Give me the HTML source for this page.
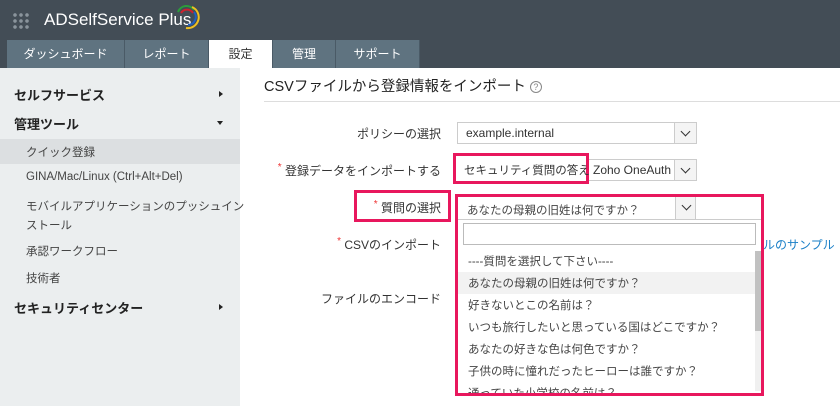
<!DOCTYPE html>
<html><head><meta charset="utf-8"><style>
*{margin:0;padding:0;box-sizing:border-box}
body{width:840px;height:406px;overflow:hidden;position:relative;background:#fff;font-family:"Liberation Sans","Noto Sans CJK JP",sans-serif;color:#333;font-size:12px}
.a{position:absolute;white-space:nowrap}
.hdr{left:0;top:0;width:840px;height:68px;background:#434d56}
.tab{top:40px;height:28px;background:#5f7380;color:#fff;font-size:12px;text-align:center;line-height:28px;border-right:1px solid #4a5a66}
.side{left:0;top:68px;width:240px;height:338px;background:#ebeeef}
.sb{font-weight:bold;font-size:13px;color:#222;left:14px}
.si{left:26px;font-size:11.5px;color:#444}
.lbl{right:399px;font-size:12px;color:#333;text-align:right}
.sel{border:1px solid #ccc;background:#fff;height:22px}
.arr{position:absolute;right:0;top:0;width:22px;height:100%;border-left:1px solid #ccc;background:#f4f4f4}
.arr:after{content:"";position:absolute;left:7px;top:5px;width:6px;height:6px;border-right:1.5px solid #333;border-bottom:1.5px solid #333;transform:rotate(45deg)}
.red{border:3px solid #e8175d}
.opt{left:10px;font-size:11.5px;color:#444}
</style></head><body>
<div class="a hdr"></div>
<div class="a" style="left:12px;top:12px;width:18px;height:18px;background:radial-gradient(circle,#8a949c 1.6px,transparent 2px) 0 0/6px 6px"></div>
<div class="a" style="left:44px;top:10px;color:#fff;font-size:17px;">ADSelfService Plus</div>
<svg class="a" style="left:172px;top:4px" width="28" height="26" viewBox="0 0 28 26"><path d="M6 8 A9 9 0 0 1 22 6" stroke="#2a9d3a" stroke-width="2" fill="none"/><path d="M9 9 A7 7 0 0 1 21 9" stroke="#d0202e" stroke-width="2" fill="none"/><path d="M20 3 A11 11 0 0 1 14 24" stroke="#f0c020" stroke-width="2" fill="none"/><path d="M22 8 A8 8 0 0 1 16 21" stroke="#2060c0" stroke-width="2" fill="none"/></svg>
<div class="a tab" style="left:7px;width:118px">ダッシュボード</div>
<div class="a tab" style="left:125px;width:84px">レポート</div>
<div class="a tab" style="left:209px;width:64px;background:#fff;color:#333">設定</div>
<div class="a tab" style="left:273px;width:63px">管理</div>
<div class="a tab" style="left:336px;width:84px">サポート</div>
<div class="a side"></div>
<div class="a sb" style="top:85px">セルフサービス</div>
<div class="a" style="left:219px;top:91px;border-left:4px solid #222;border-top:3.5px solid transparent;border-bottom:3.5px solid transparent"></div>
<div class="a sb" style="top:114px">管理ツール</div>
<div class="a" style="left:217px;top:121px;border-top:4px solid #222;border-left:3.5px solid transparent;border-right:3.5px solid transparent"></div>
<div class="a" style="left:0;top:139px;width:240px;height:25px;background:#dcdfe1"></div>
<div class="a si" style="top:144px">クイック登録</div>
<div class="a si" style="top:171px">GINA/Mac/Linux (Ctrl+Alt+Del)</div>
<div class="a si" style="top:198px">モバイルアプリケーションのプッシュイン</div>
<div class="a si" style="top:217px">ストール</div>
<div class="a si" style="top:243px">承認ワークフロー</div>
<div class="a si" style="top:270px">技術者</div>
<div class="a sb" style="top:298px">セキュリティセンター</div>
<div class="a" style="left:219px;top:304px;border-left:4px solid #222;border-top:3.5px solid transparent;border-bottom:3.5px solid transparent"></div>
<div class="a" style="left:264px;top:75px;font-size:14.5px;color:#222">CSVファイルから登録情報をインポート <span style="display:inline-block;width:12px;height:12px;border:1px solid #888;border-radius:50%;font-size:9px;text-align:center;line-height:10px;color:#888;vertical-align:middle">?</span></div>
<div class="a" style="left:264px;top:101px;width:576px;height:1px;background:#ddd"></div>
<div class="a lbl" style="top:125px">ポリシーの選択</div>
<div class="a sel" style="left:457px;top:122px;width:240px"><span style="position:absolute;left:8px;top:3px">example.internal</span><div class="arr"></div></div>
<div class="a lbl" style="top:162px"><span style="color:#e33;font-size:10px;vertical-align:top">*</span> 登録データをインポートする</div>
<div class="a sel" style="left:588px;top:159px;width:109px"><span style="position:absolute;left:4px;top:3px">Zoho OneAuth</span><div class="arr"></div></div>
<div class="a red" style="left:453px;top:153px;width:136px;height:31px;background:#fff"><span style="position:absolute;left:8px;top:6px;font-size:11.5px">セキュリティ質問の答え</span></div>
<div class="a red" style="left:354px;top:190px;width:97px;height:32px"></div>
<div class="a lbl" style="top:199px"><span style="color:#e33;font-size:10px;vertical-align:top">*</span> 質問の選択</div>
<div class="a lbl" style="top:236px"><span style="color:#e33;font-size:10px;vertical-align:top">*</span> CSVのインポート</div>
<div class="a lbl" style="top:290px">ファイルのエンコード</div>
<div class="a" style="left:763px;top:236px;color:#1a7fc7;font-size:12px">ルのサンプル</div>
<div class="a red" style="left:455px;top:194px;width:309px;height:202px;background:#fff">
 <div class="a" style="left:0;top:0;width:303px;height:23px;border-bottom:1px solid #ccc"><span style="position:absolute;left:9px;top:5px;font-size:11.5px;color:#444">あなたの母親の旧姓は何ですか？</span><div class="arr" style="right:65px;top:0;height:22px;width:21px;border-right:1px solid #ccc"></div></div>
 <div class="a" style="left:5px;top:26px;width:293px;height:22px;border:1px solid #bbb"></div>
 <div class="a" style="left:297px;top:54px;width:6px;height:140px;background:#f0f0f0"></div>
 <div class="a" style="left:297px;top:54px;width:6px;height:80px;background:#c1c1c1"></div>
 <div class="a" style="left:0;top:75px;width:297px;height:22px;background:#f2f2f2"></div>
 <div class="a opt" style="top:56px">----質問を選択して下さい----</div>
 <div class="a opt" style="top:78px">あなたの母親の旧姓は何ですか？</div>
 <div class="a opt" style="top:100px">好きないとこの名前は？</div>
 <div class="a opt" style="top:122px">いつも旅行したいと思っている国はどこですか？</div>
 <div class="a opt" style="top:144px">あなたの好きな色は何色ですか？</div>
 <div class="a opt" style="top:166px">子供の時に憧れだったヒーローは誰ですか？</div>
 <div class="a opt" style="top:188px;height:8px;overflow:hidden">通っていた小学校の名前は？</div>
</div>
</body></html>
